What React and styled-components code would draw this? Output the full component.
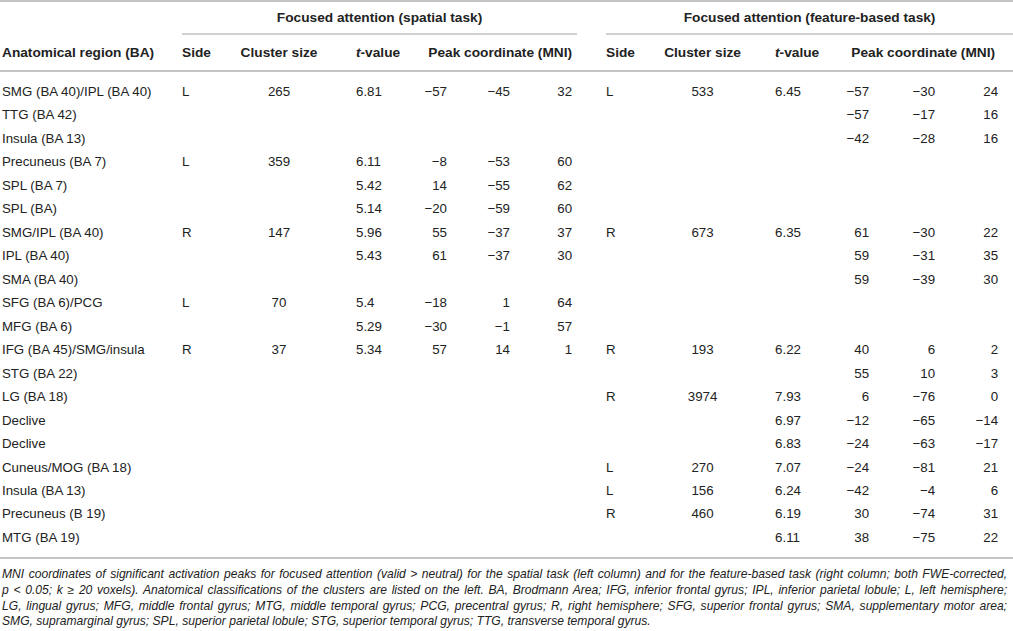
import React from 'react';
import styled, { createGlobalStyle } from 'styled-components';

const GlobalStyle = createGlobalStyle`
  body {
    margin: 0;
    background: #fff;
    font-family: "Liberation Sans", Arial, sans-serif;
    color: #222;
  }
`;

const widths = [182, 48, 98, 82, 37, 63, 67, 29, 47, 99, 78, 39, 66, 78];

const rows = [
  ['SMG (BA 40)/IPL (BA 40)', 'L', '265', '6.81', '−57', '−45', '32', 'L', '533', '6.45', '−57', '−30', '24'],
  ['TTG (BA 42)', '', '', '', '', '', '', '', '', '', '−57', '−17', '16'],
  ['Insula (BA 13)', '', '', '', '', '', '', '', '', '', '−42', '−28', '16'],
  ['Precuneus (BA 7)', 'L', '359', '6.11', '−8', '−53', '60', '', '', '', '', '', ''],
  ['SPL (BA 7)', '', '', '5.42', '14', '−55', '62', '', '', '', '', '', ''],
  ['SPL (BA)', '', '', '5.14', '−20', '−59', '60', '', '', '', '', '', ''],
  ['SMG/IPL (BA 40)', 'R', '147', '5.96', '55', '−37', '37', 'R', '673', '6.35', '61', '−30', '22'],
  ['IPL (BA 40)', '', '', '5.43', '61', '−37', '30', '', '', '', '59', '−31', '35'],
  ['SMA (BA 40)', '', '', '', '', '', '', '', '', '', '59', '−39', '30'],
  ['SFG (BA 6)/PCG', 'L', '70', '5.4', '−18', '1', '64', '', '', '', '', '', ''],
  ['MFG (BA 6)', '', '', '5.29', '−30', '−1', '57', '', '', '', '', '', ''],
  ['IFG (BA 45)/SMG/insula', 'R', '37', '5.34', '57', '14', '1', 'R', '193', '6.22', '40', '6', '2'],
  ['STG (BA 22)', '', '', '', '', '', '', '', '', '', '55', '10', '3'],
  ['LG (BA 18)', '', '', '', '', '', '', 'R', '3974', '7.93', '6', '−76', '0'],
  ['Declive', '', '', '', '', '', '', '', '', '6.97', '−12', '−65', '−14'],
  ['Declive', '', '', '', '', '', '', '', '', '6.83', '−24', '−63', '−17'],
  ['Cuneus/MOG (BA 18)', '', '', '', '', '', '', 'L', '270', '7.07', '−24', '−81', '21'],
  ['Insula (BA 13)', '', '', '', '', '', '', 'L', '156', '6.24', '−42', '−4', '6'],
  ['Precuneus (B 19)', '', '', '', '', '', '', 'R', '460', '6.19', '30', '−74', '31'],
  ['MTG (BA 19)', '', '', '', '', '', '', '', '', '6.11', '38', '−75', '22'],
];

// how each data column sits in its cell
const kinds = ['region', 'side', 'size', 'tval', 'coord', 'coord', 'coordEnd', 'side', 'size', 'tval', 'coord', 'coord', 'coordLast'];

const Table = styled.table`
  width: 1013px;
  table-layout: fixed;
  border-collapse: collapse;
  border-top: 2px solid #c4c4c4;
  border-bottom: 2px solid #c4c4c4;
`;

const GroupCell = styled.th`
  font-size: 13.7px;
  font-weight: bold;
  height: 31px;
  padding: 0;
  text-align: center;
  vertical-align: middle;
  border-bottom: ${(p) => (p.$line ? '2px solid #d0d0d0' : 'none')};
`;

const HeadCell = styled.th`
  font-size: 13.7px;
  font-weight: bold;
  height: 35px;
  padding: 0 ${(p) => p.$pr || 0}px 0 ${(p) => p.$pl || 0}px;
  text-align: ${(p) => p.$align || 'left'};
  white-space: nowrap;
  border-bottom: 2px solid #c4c4c4;
  em {
    font-style: italic;
  }
`;

const Row = styled.tr`
  & > td {
    padding-top: ${(p) => (p.$first ? 8 : 0)}px;
    padding-bottom: ${(p) => (p.$last ? 8 : 0)}px;
  }
`;

const Cell = styled.td`
  font-size: 13.3px;
  line-height: 23.47px;
  white-space: nowrap;
  padding-left: ${(p) => (p.$kind === 'region' ? 2 : p.$kind === 'tval' ? (p.$right ? 23 : 28) : 0)}px;
  padding-right: ${(p) => (p.$kind === 'coordEnd' ? 5 : p.$kind === 'coordLast' ? 15 : 0)}px;
  text-align: ${(p) =>
    p.$kind === 'size' ? 'center' : p.$kind.startsWith('coord') ? 'right' : 'left'};
`;

const Caption = styled.div`
  width: 1005px;
  padding: 8px 0 0 2px;
  font-size: 12.1px;
  line-height: 15.7px;
  font-style: italic;
  color: #222;
`;

const CaptionLine = styled.span`
  display: block;
  white-space: nowrap;
  text-align: justify;
  text-align-last: ${(p) => (p.$end ? 'left' : 'justify')};
`;

export default function App() {
  return (
    <>
      <GlobalStyle />
      <Table>
        <colgroup>
          {widths.map((w, i) => (
            <col key={i} style={{ width: w }} />
          ))}
        </colgroup>
        <thead>
          <tr>
            <GroupCell />
            <GroupCell colSpan={6} $line>Focused attention (spatial task)</GroupCell>
            <GroupCell />
            <GroupCell colSpan={6} $line>Focused attention (feature-based task)</GroupCell>
          </tr>
          <tr>
            <HeadCell $pl={2}>Anatomical region (BA)</HeadCell>
            <HeadCell>Side</HeadCell>
            <HeadCell $align="center">Cluster size</HeadCell>
            <HeadCell $pl={28}><em>t</em>-value</HeadCell>
            <HeadCell colSpan={3} $align="right" $pr={5}>Peak coordinate (MNI)</HeadCell>
            <HeadCell />
            <HeadCell>Side</HeadCell>
            <HeadCell $align="center">Cluster size</HeadCell>
            <HeadCell $pl={23}><em>t</em>-value</HeadCell>
            <HeadCell colSpan={3} $align="right" $pr={18}>Peak coordinate (MNI)</HeadCell>
          </tr>
        </thead>
        <tbody>
          {rows.map((r, i) => (
            <Row key={i} $first={i === 0} $last={i === rows.length - 1}>
              {r.slice(0, 7).map((v, j) => (
                <Cell key={j} $kind={kinds[j]}>{v}</Cell>
              ))}
              <Cell $kind="gap" />
              {r.slice(7).map((v, j) => (
                <Cell key={j + 7} $kind={kinds[j + 7]} $right>{v}</Cell>
              ))}
            </Row>
          ))}
        </tbody>
      </Table>
      <Caption>
        <CaptionLine>MNI coordinates of significant activation peaks for focused attention (valid &gt; neutral) for the spatial task (left column) and for the feature-based task (right column; both FWE-corrected,</CaptionLine>
        <CaptionLine>p &lt; 0.05; k ≥ 20 voxels). Anatomical classifications of the clusters are listed on the left. BA, Brodmann Area; IFG, inferior frontal gyrus; IPL, inferior parietal lobule; L, left hemisphere;</CaptionLine>
        <CaptionLine>LG, lingual gyrus; MFG, middle frontal gyrus; MTG, middle temporal gyrus; PCG, precentral gyrus; R, right hemisphere; SFG, superior frontal gyrus; SMA, supplementary motor area;</CaptionLine>
        <CaptionLine $end>SMG, supramarginal gyrus; SPL, superior parietal lobule; STG, superior temporal gyrus; TTG, transverse temporal gyrus.</CaptionLine>
      </Caption>
    </>
  );
}
